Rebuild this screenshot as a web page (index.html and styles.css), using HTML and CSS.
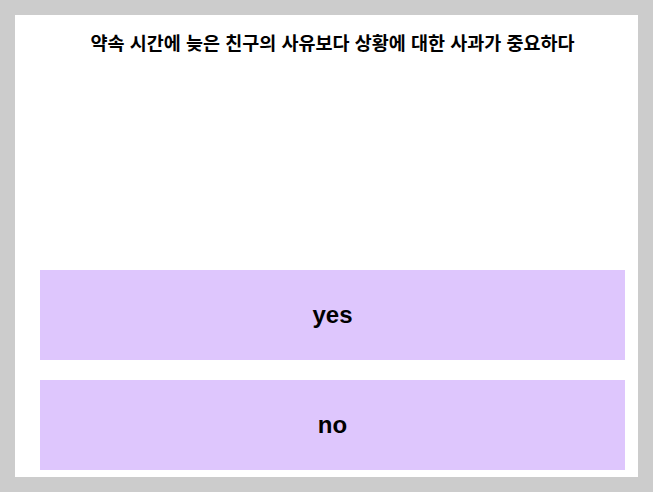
FILE: index.html
```html
<!DOCTYPE html>
<html lang="ko">
<head>
<meta charset="utf-8">
<link rel="stylesheet" href="styles.css">
</head>
<body>
<div class="panel">
  <h1 class="title">약속 시간에 늦은 친구의 사유보다 상황에 대한 사과가 중요하다</h1>
  <div class="choices">
    <div class="choice">yes</div>
    <div class="choice">no</div>
  </div>
</div>
</body>
</html>
```
FILE: styles.css
```css
html, body {
  margin: 0;
  padding: 0;
}
body {
  background: #cccccc;
  padding: 15px;
  width: 623px;
  height: 462px;
}
.panel {
  background: #ffffff;
  width: 623px;
  height: 462px;
  box-sizing: border-box;
  padding: 16px 13px 7px 25px;
  display: flex;
  flex-direction: column;
}
.title {
  margin: 0;
  font-family: "Noto Sans CJK KR", "Noto Sans", sans-serif;
  font-weight: 700;
  font-size: 18.5px;
  line-height: 22px;
  text-align: center;
  color: #000;
}
.choices {
  margin-top: auto;
  display: flex;
  flex-direction: column;
  gap: 20px;
}
.choice {
  height: 90px;
  background: #dec6fd;
  display: flex;
  align-items: center;
  justify-content: center;
  font-family: "Liberation Sans", Arial, sans-serif;
  font-weight: 700;
  font-size: 24px;
  color: #000;
}
```
